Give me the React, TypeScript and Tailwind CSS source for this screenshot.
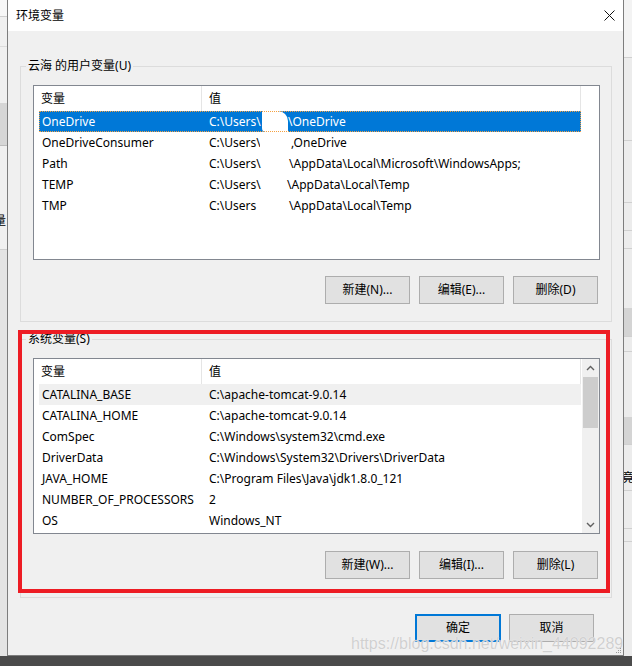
import React from "react";

type UserRow = { name: string; pre: string; preW: number; gapW: number; post: string; blob?: boolean };

const userRows: UserRow[] = [
  { name: "OneDrive", pre: "C:\\Users\\", preW: 53, gapW: 26, post: "\\OneDrive", blob: true },
  { name: "OneDriveConsumer", pre: "C:\\Users\\", preW: 51, gapW: 31, post: ",OneDrive" },
  { name: "Path", pre: "C:\\Users\\", preW: 55, gapW: 25, post: "\\AppData\\Local\\Microsoft\\WindowsApps;" },
  { name: "TEMP", pre: "C:\\Users\\", preW: 53, gapW: 25, post: "\\AppData\\Local\\Temp" },
  { name: "TMP", pre: "C:\\Users", preW: 50, gapW: 30, post: "\\AppData\\Local\\Temp" },
];

const sysRows = [
  ["CATALINA_BASE", "C:\\apache-tomcat-9.0.14"],
  ["CATALINA_HOME", "C:\\apache-tomcat-9.0.14"],
  ["ComSpec", "C:\\Windows\\system32\\cmd.exe"],
  ["DriverData", "C:\\Windows\\System32\\Drivers\\DriverData"],
  ["JAVA_HOME", "C:\\Program Files\\Java\\jdk1.8.0_121"],
  ["NUMBER_OF_PROCESSORS", "2"],
  ["OS", "Windows_NT"],
];

function Btn({ label, primary }: { label: string; primary?: boolean }) {
  return (
    <button
      className={
        primary
          ? "w-[86px] h-[28px] bg-[#e1e1e1] border-2 border-[#0078d7] flex items-center justify-center"
          : "w-[85px] h-[28px] bg-[#e1e1e1] border border-[#adadad] flex items-center justify-center"
      }
    >
      {label}
    </button>
  );
}

function ListHeader() {
  return (
    <div className="flex h-[25px] w-[547px] items-center">
      <div className="w-[168px] h-full pl-[7px] flex items-center border-r border-[#e5e5e5]">变量</div>
      <div className="flex-1 h-full pl-[7px] flex items-center border-r border-[#e5e5e5]">值</div>
    </div>
  );
}

function Chevron({ up }: { up?: boolean }) {
  return (
    <svg width="9" height="6" viewBox="0 0 9 6">
      <path
        d={up ? "M1 5 L4.5 1.5 L8 5" : "M1 1 L4.5 4.5 L8 1"}
        fill="none"
        stroke="#606060"
        strokeWidth="1.4"
      />
    </svg>
  );
}

function Group({ label, children, h }: { label: string; children: React.ReactNode; h: string }) {
  return (
    <div className={`relative w-[592px] border border-[#dcdcdc] pt-[18px] pl-[12px] ${h}`}>
      <div className="absolute -top-[9px] left-[5px] px-[2px] bg-[#f0f0f0] leading-[16px]">{label}</div>
      {children}
    </div>
  );
}

function UserList() {
  return (
    <div className="w-[567px] h-[175px] border border-[#828790] bg-white flex">
      <div className="w-[548px]">
        <ListHeader />
        {userRows.map((r, i) => (
          <div
            key={r.name}
            className={
              i === 0
                ? "flex h-[21px] items-center w-[542px] ml-[5px] bg-[#0078d7] text-white outline outline-1 outline-dotted outline-[#f5a142] -outline-offset-1"
                : "flex h-[21px] items-center w-[542px] ml-[5px]"
            }
          >
            <div className="w-[163px] pl-[3px] whitespace-nowrap">{r.name}</div>
            <div className="pl-[7px] flex items-center h-full whitespace-nowrap">
              <span className="overflow-hidden" style={{ width: r.preW }}>
                {r.pre}
              </span>
              <span
                className={r.blob ? "bg-white h-full rounded-tr-[10px] rounded-bl-[4px]" : "h-full"}
                style={{ width: r.gapW }}
              />
              <span>{r.post}</span>
            </div>
          </div>
        ))}
      </div>
    </div>
  );
}

function SysList() {
  return (
    <div className="w-[567px] h-[176px] border border-[#828790] bg-white flex">
      <div className="w-[548px]">
        <ListHeader />
        {sysRows.map(([n, v], i) => (
          <div
            key={n}
            className={
              i === 0
                ? "flex h-[21px] items-center w-[542px] ml-[5px] bg-[#f0f0f0]"
                : "flex h-[21px] items-center w-[542px] ml-[5px]"
            }
          >
            <div className="w-[163px] pl-[3px] whitespace-nowrap">{n}</div>
            <div className="pl-[7px] whitespace-nowrap">{v}</div>
          </div>
        ))}
      </div>
      <div className="w-[17px] bg-[#f0f0f0] flex flex-col items-center">
        <div className="h-[18px] flex items-center justify-center">
          <Chevron up />
        </div>
        <div className="w-[15px] h-[51px] bg-[#cdcdcd]" />
        <div className="flex-1" />
        <div className="h-[17px] flex items-center justify-center">
          <Chevron />
        </div>
      </div>
    </div>
  );
}

function LeftStrip() {
  return (
    <div className="w-[7px] h-full flex flex-col overflow-hidden bg-[#f0f0f0]">
      <div className="h-[16px] bg-[#f7f7f7]" />
      <div className="h-[30px] border-t border-[#cfcfcf]" />
      <div className="h-[57px] border-t border-[#dcdcdc]" />
      <div className="h-[42px] bg-[#d6d6d6]" />
      <div className="h-[68px] border-t border-[#bdbdbd]" />
      <div className="h-[36px] -ml-[6px] leading-[16px]">量</div>
      <div className="flex-1 bg-[#e4e4e4] border-t border-[#cfcfcf]" />
    </div>
  );
}

function RightStrip() {
  return (
    <div className="w-[8px] h-full flex flex-col overflow-hidden bg-[#ececec]">
      <div className="h-[57px] bg-[#f3f3f3]" />
      <div className="h-[83px] border-t border-[#d0d0d0]" />
      <div className="h-[62px] border-t border-[#d0d0d0]" />
      <div className="h-[28px] border-t border-[#d0d0d0]" />
      <div className="h-[18px] border-t border-[#d0d0d0]" />
      <div className="h-[60px] border-t border-[#d0d0d0]" />
      <div className="h-[28px] bg-[#d4d4d4]" />
      <div className="h-[15px] border-t border-[#d0d0d0]" />
      <div className="h-[66px] border-t border-[#d0d0d0]" />
      <div className="h-[27px] bg-[#d4d4d4]" />
      <div className="h-[26px] border-t border-[#d0d0d0]" />
      <div className="h-[20px] -ml-[2px] leading-[16px]">竟</div>
      <div className="h-[38px] border-t border-[#d0d0d0]" />
      <div className="h-[13px] border-t border-[#d0d0d0]" />
      <div className="flex-1 border-t border-[#d0d0d0]" />
    </div>
  );
}

export default function App() {
  return (
    <div className="relative w-[632px] h-[666px] flex flex-col bg-[#4b4b4b] overflow-hidden text-[12px] text-black font-['Noto_Sans','Noto_Sans_CJK_SC',sans-serif]">
      <div className="flex h-[656px]">
        <LeftStrip />
        <div className="relative w-[617px] h-full border-x border-b border-[#7d7d7d] bg-[#f0f0f0] flex flex-col">
          <div className="h-[31px] bg-white flex items-center justify-between pl-[8px] pr-[8px]">
            <span>环境变量</span>
            <svg width="11" height="11" viewBox="0 0 11 11">
              <path d="M0.5 0.5 L10.5 10.5 M10.5 0.5 L0.5 10.5" stroke="#111" strokeWidth="1" />
            </svg>
          </div>

          <div className="flex flex-col pl-[12px]">
            <div className="mt-[35px]">
              <Group label="云海 的用户变量(U)" h="h-[256px]">
                <UserList />
                <div className="flex justify-end gap-[9px] pr-[13px] mt-[16px]">
                  <Btn label="新建(N)..." />
                  <Btn label="编辑(E)..." />
                  <Btn label="删除(D)" />
                </div>
              </Group>
            </div>

            <div className="mt-[17px]">
              <Group label="系统变量(S)" h="h-[259px]">
                <SysList />
                <div className="flex justify-end gap-[9px] pr-[13px] mt-[17px]">
                  <Btn label="新建(W)..." />
                  <Btn label="编辑(I)..." />
                  <Btn label="删除(L)" />
                </div>
              </Group>
            </div>

            <div className="flex justify-end gap-[8px] pr-[29px] mt-[16px]">
              <Btn label="确定" primary />
              <Btn label="取消" />
            </div>
          </div>

          <div className="absolute left-[343px] top-[634px] text-[16px] leading-[20px] text-[#d0d0d0] font-['Liberation_Sans',sans-serif] [text-shadow:0_0_1px_#ffffff] whitespace-nowrap">
            https://blog.csdn.net/weixin_44092289
          </div>
          <div className="absolute right-[2px] bottom-[2px] grid grid-cols-3 gap-[1px]">
            <span className="w-[1px] h-[1px]" />
            <span className="w-[1px] h-[1px]" />
            <span className="w-[1px] h-[1px] bg-[#9a9a9a]" />
            <span className="w-[1px] h-[1px]" />
            <span className="w-[1px] h-[1px] bg-[#9a9a9a]" />
            <span className="w-[1px] h-[1px] bg-[#9a9a9a]" />
            <span className="w-[1px] h-[1px] bg-[#9a9a9a]" />
            <span className="w-[1px] h-[1px] bg-[#9a9a9a]" />
            <span className="w-[1px] h-[1px] bg-[#9a9a9a]" />
          </div>
        </div>
        <RightStrip />
      </div>

      <div className="absolute left-[18px] top-[330px] w-[592px] h-[263px] border-[4px] border-[#ed1c24] pointer-events-none" />
    </div>
  );
}
